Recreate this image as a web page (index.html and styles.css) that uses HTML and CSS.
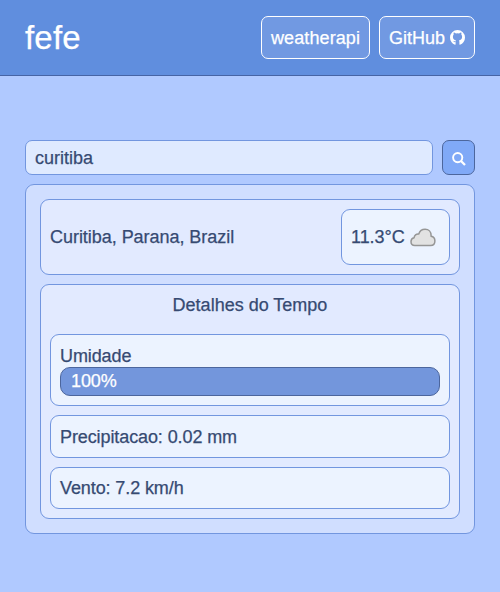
FILE: index.html
```html
<!DOCTYPE html>
<html lang="pt-BR">
<head>
<meta charset="utf-8">
<title>fefe</title>
<link rel="stylesheet" href="styles.css">
</head>
<body>
<header class="header">
  <h1 class="brand">fefe</h1>
  <nav class="nav">
    <a class="nav-link weather-link">weatherapi</a>
    <a class="nav-link github-link">GitHub
      <svg class="github-icon" width="15" height="15" viewBox="0 0 15 15"><path fill="currentColor" d="M7.500 0A7.500 7.500 0 0 0 0 7.500c0 3.400 2.100 6.200 5 7.200.5.1.6-.2.6-.4v-2.200c-1.800.3-2.300-.9-2.400-1.300.7.100 1.200.9 2.400.6.100-.4.300-.7.500-.9-2-.5-3.200-1.500-3.200-3.800 0-.9.300-1.600.8-2.200-.2-.6-.2-1.300.1-1.900.8 0 1.500.4 2.100.8a7 7 0 0 1 3.200 0c.6-.4 1.300-.8 2.100-.8.3.6.300 1.300.1 1.900.5.600.8 1.300.8 2.200 0 2.300-1.200 3.300-3.200 3.800.4.400.5.800.5 1.500v2.300c0 .200.1.5.6.400 2.900-1 5-3.800 5-7.200A7.500 7.500 0 0 0 7.500 0z"/></svg>
    </a>
  </nav>
</header>
<main class="main">
  <form class="search">
    <input class="search-input" type="text" value="curitiba">
    <button class="search-button" type="button" aria-label="Buscar">
      <svg width="14" height="14" viewBox="0 0 14 14" fill="none" stroke="currentColor"><circle cx="5.7" cy="5.6" r="4.6" stroke-width="1.9"/><path d="M9 9l4 4" stroke-width="2.300"/></svg>
    </button>
  </form>
  <section class="result">
    <div class="place">
      <span>Curitiba, Parana, Brazil</span>
      <div class="temperature">
        <span>11.3°C</span>
        <svg class="cloud" width="26" height="19" viewBox="0 0 26 19"><path d="M4.800 17.400C2.500 17.400 1 15.900 1 13.700c0-2 1.300-3.500 3.100-3.900C4.300 7.300 6.200 5.800 8.700 6.100 9.600 3.200 12 1.200 15.100 1.200c3.600 0 6 2.500 6 6.200v.9c2.300.4 3.800 2.200 3.800 4.600 0 2.600-1.700 4.500-4.300 4.500z" fill="#e2e2e2" stroke="#969696" stroke-width="1.500" stroke-linejoin="round"/></svg>
      </div>
    </div>
    <section class="details">
      <h2 class="details-title">Detalhes do Tempo</h2>
      <div class="detail humidity">
        <span>Umidade</span>
        <div class="bar">100%</div>
      </div>
      <div class="detail rain">Precipitacao: 0.02 mm</div>
      <div class="detail wind">Vento: 7.2 km/h</div>
    </section>
  </section>
</main>
</body>
</html>
```
FILE: styles.css
```css
* { box-sizing: border-box; }

body {
  margin: 0;
  min-height: 592px;
  background: #b0c9ff;
  color: #364a72;
  font: 18px/21px "Liberation Sans", Arial, sans-serif;
  -webkit-text-stroke: 0.25px currentColor;
}

.header {
  display: flex;
  align-items: center;
  justify-content: space-between;
  height: 76px;
  padding: 0 25px;
  background: #608ede;
  border-bottom: 1px solid #4664a5;
  color: #fff;
}

.brand {
  margin: 0;
  font-size: 33px;
  line-height: 38px;
  font-weight: 400;
  letter-spacing: 0.2px;
}

.nav { display: flex; gap: 9px; }

.nav-link {
  display: flex;
  align-items: center;
  gap: 5px;
  height: 43px;
  padding: 1px 9px 0;
  border: 1px solid #fff;
  border-radius: 7px;
  background: #7199e2;
}

.weather-link { width: 109px; letter-spacing: 0.1px; }
.github-link { width: 96px; }
.github-icon { flex: none; margin-top: -1px; }

.main { padding: 64px 25px 0; }

.search { display: flex; gap: 9px; height: 35px; margin-bottom: 9px; }

.search-input {
  flex: 1;
  min-width: 0;
  padding: 1px 9px 0;
  border: 1px solid #7296df;
  border-radius: 7px;
  outline: 0;
  background: #dfeaff;
  color: inherit;
  font: inherit;
}

.search-button {
  display: flex;
  align-items: center;
  justify-content: center;
  width: 33px;
  padding: 2px 0 0;
  border: 1px solid #4c669d;
  border-radius: 7px;
  background: #80a9f7;
  color: #fff;
}

.result {
  display: flex;
  flex-direction: column;
  gap: 9px;
  height: 350px;
  padding: 14px;
  border: 1px solid #7296df;
  border-radius: 9px;
  background: #d0deff;
}

.place {
  display: flex;
  align-items: center;
  justify-content: space-between;
  height: 76px;
  padding: 9px;
  border: 1px solid #7296df;
  border-radius: 9px;
  background: #e2eaff;
  letter-spacing: -0.04px;
}

.temperature {
  display: flex;
  align-items: center;
  gap: 5px;
  width: 109px;
  height: 56px;
  padding: 0 9px;
  border: 1px solid #7296df;
  border-radius: 9px;
  background: #ecf3ff;
}

.cloud { flex: none; }

.details {
  display: flex;
  flex-direction: column;
  gap: 9px;
  height: 235px;
  padding: 9px;
  border: 1px solid #7296df;
  border-radius: 9px;
  background: #e2eaff;
}

.details-title {
  height: 31px;
  margin: 0;
  font-size: 18px;
  font-weight: 400;
  line-height: 22px;
  text-align: center;
}

.detail {
  padding: 0 9px;
  border: 1px solid #7296df;
  border-radius: 9px;
  background: #ecf3ff;
  letter-spacing: -0.1px;
}

.humidity {
  display: flex;
  flex-direction: column;
  height: 72px;
  padding-top: 11px;
}

.bar {
  height: 29px;
  padding-left: 10px;
  border: 1px solid #4c669d;
  border-radius: 10px;
  background: #7396dc;
  color: #fff;
  line-height: 27px;
}

.rain { height: 43px; line-height: 43px; }
.wind { height: 42px; line-height: 40px; }
```
